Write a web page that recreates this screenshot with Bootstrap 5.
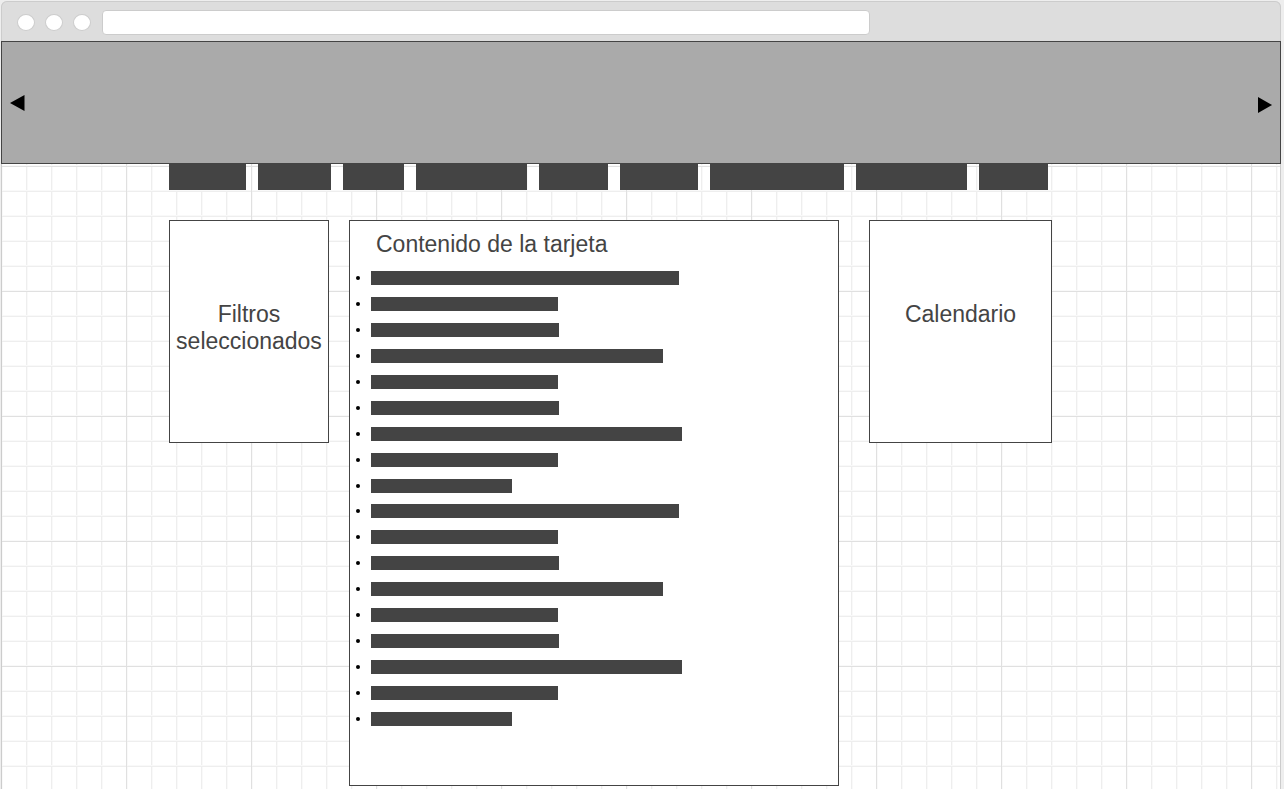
<!DOCTYPE html>
<html lang="es">
<head>
<meta charset="utf-8">
<meta name="viewport" content="width=device-width, initial-scale=1">
<title>Tarjetas</title>
<link href="https://cdn.jsdelivr.net/npm/bootstrap@5.3.0/dist/css/bootstrap.min.css" rel="stylesheet">
<style>
  :root { --ink: #444; --edge: #ccc; }
  body { background: #eee; color: var(--ink); font: 23px/27px "Liberation Sans", Arial, sans-serif; }
  .browser { margin: 1px 3px 0 1px; min-height: calc(100vh - 1px); border-radius: 6px 6px 0 0; background: #ddd; box-shadow: inset 0 0 0 1px var(--edge); }
  .toolbar { height: 40px; padding: 3px 0 0 16px; gap: 10px; }
  .dot { width: 18px; height: 17px; border: 1px solid var(--edge); background: #fff; }
  .address { width: calc(60% + 10px); height: 25px; border: 1px solid var(--edge); border-radius: 4px; background: #fff; margin-left: 1px; font-size: 14px; }
  .banner { height: 123px; background: #aaa; border: 1px solid var(--ink); padding: 0 8px; }
  .arrow { border: 0; padding: 0; background: none; color: #000; }
  .canvas { min-height: calc(100vh - 164px); border: solid var(--edge); border-width: 0 1px; background-color: #fff; background-origin: border-box;
    background-image: linear-gradient(#e0e0e0 1px, transparent 1px), linear-gradient(90deg, #e0e0e0 1px, transparent 1px),
      linear-gradient(#eee 1px, transparent 1px 24px, #f9f9f9 24px), linear-gradient(90deg, #eee 1px, #f9f9f9 1px 2px, transparent 2px);
    background-size: 125px 125px, 125px 125px, 25px 25px, 25px 25px; background-position: 0 2px; }
  .layout { display: grid; margin: 0 -1px; grid-template-columns: 168fr 160fr 20fr 490fr 30fr 183fr 229fr; row-gap: 30px; padding-bottom: 3px; }
  .tabs { grid-column: 2 / 7; gap: 12px; padding-right: 4px; }
  .tabs a { height: 26px; background: var(--ink); flex-basis: 0; }
  .panel { background: #fff; border: 1px solid var(--ink); }
  .side { height: 223px; padding-top: 80px; }
  .filters { grid-column: 2; }
  .content { grid-column: 4; min-height: 566px; padding: 10px 6px; }
  .calendar { grid-column: 6; }
  .heading { font-size: 23px; line-height: 27px; font-weight: 400; margin: 0; }
  .content .heading { padding-left: 20px; margin-bottom: 13px; }
  .lines { gap: 12px; margin-bottom: 11px; }
  .lines li { display: flex; align-items: center; gap: 11px; height: 14px; }
  .lines li::before { content: ""; width: 4px; height: 4px; border-radius: 50%; background: #000; }
  .lines span { height: 14px; background: var(--ink); }
</style>
</head>
<body>
<div class="browser">
  <header class="toolbar d-flex align-items-center">
    <span class="dot rounded-circle"></span>
    <span class="dot rounded-circle"></span>
    <span class="dot rounded-circle"></span>
    <input class="address" type="text" aria-label="Dirección">
  </header>
  <section class="banner d-flex align-items-center justify-content-between">
    <button class="arrow" type="button" aria-label="Anterior"><svg class="d-block" width="15" height="16" viewBox="0 0 15 16"><path d="M14.5 0v16L0 8z" fill="currentColor"/></svg></button>
    <button class="arrow pt-1" type="button" aria-label="Siguiente"><svg class="d-block" width="15" height="16" viewBox="0 0 15 16"><path d="M1 0v16l14-8z" fill="currentColor"/></svg></button>
  </section>
  <main class="canvas">
    <div class="layout align-items-start">
      <nav class="tabs d-flex" aria-label="Secciones">
        <a href="#" style="flex-grow:77" aria-label="Sección 1"></a>
        <a href="#" style="flex-grow:73" aria-label="Sección 2"></a>
        <a href="#" style="flex-grow:61" aria-label="Sección 3"></a>
        <a href="#" style="flex-grow:111" aria-label="Sección 4"></a>
        <a href="#" style="flex-grow:69" aria-label="Sección 5"></a>
        <a href="#" style="flex-grow:78" aria-label="Sección 6"></a>
        <a href="#" style="flex-grow:134" aria-label="Sección 7"></a>
        <a href="#" style="flex-grow:111" aria-label="Sección 8"></a>
        <a href="#" style="flex-grow:69" aria-label="Sección 9"></a>
      </nav>
      <aside class="panel side filters text-center">
        <h2 class="heading">Filtros seleccionados</h2>
      </aside>
      <article class="panel content">
        <h1 class="heading">Contenido de la tarjeta</h1>
        <ul class="lines list-unstyled d-flex flex-column">
          <li><span style="width:308px"></span></li>
          <li><span style="width:187px"></span></li>
          <li><span style="width:188px"></span></li>
          <li><span style="width:292px"></span></li>
          <li><span style="width:187px"></span></li>
          <li><span style="width:188px"></span></li>
          <li><span style="width:311px"></span></li>
          <li><span style="width:187px"></span></li>
          <li><span style="width:141px"></span></li>
        </ul>
        <ul class="lines list-unstyled d-flex flex-column">
          <li><span style="width:308px"></span></li>
          <li><span style="width:187px"></span></li>
          <li><span style="width:188px"></span></li>
          <li><span style="width:292px"></span></li>
          <li><span style="width:187px"></span></li>
          <li><span style="width:188px"></span></li>
          <li><span style="width:311px"></span></li>
          <li><span style="width:187px"></span></li>
          <li><span style="width:141px"></span></li>
        </ul>
      </article>
      <aside class="panel side calendar text-center">
        <h2 class="heading">Calendario</h2>
      </aside>
    </div>
  </main>
</div>
<script src="https://cdn.jsdelivr.net/npm/bootstrap@5.3.0/dist/js/bootstrap.bundle.min.js"></script>
</body>
</html>
